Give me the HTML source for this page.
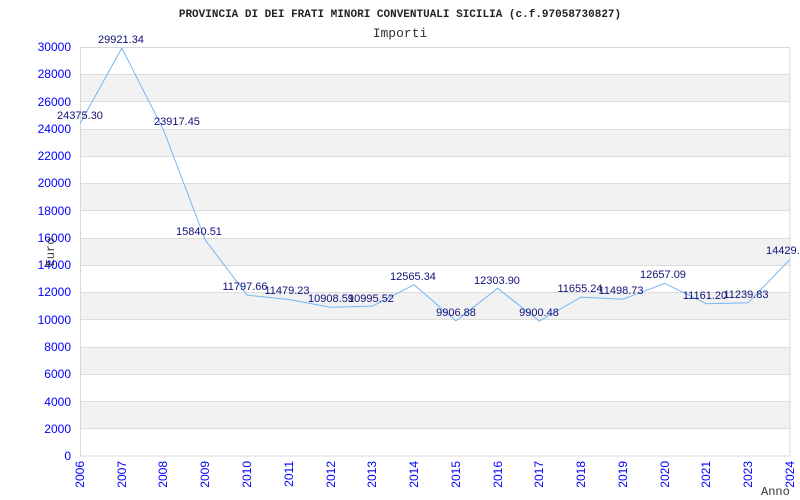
<!DOCTYPE html>
<html><head><style>
body{margin:0;background:#fff}
svg{display:block}
.t{font-family:"Liberation Sans",sans-serif;font-size:11px;fill:#10107a;text-anchor:middle}
.ax{font-family:"Liberation Sans",sans-serif;font-size:12px;fill:#0000ff}
</style></head><body>
<svg width="800" height="500" xmlns="http://www.w3.org/2000/svg">
<rect width="800" height="500" fill="#fff"/>
<text x="400" y="17" text-anchor="middle" font-family="Liberation Mono,monospace" font-size="11" font-weight="bold" fill="#222">PROVINCIA DI DEI FRATI MINORI CONVENTUALI SICILIA (c.f.97058730827)</text>
<text x="400" y="37" text-anchor="middle" font-family="Liberation Mono,monospace" font-size="13" fill="#333">Importi</text>
<g fill="#f2f2f2">
<rect x="80" y="401.5" width="710" height="27.3"/>
<rect x="80" y="347" width="710" height="27.3"/>
<rect x="80" y="292.5" width="710" height="27.3"/>
<rect x="80" y="238" width="710" height="27.3"/>
<rect x="80" y="183.5" width="710" height="27.3"/>
<rect x="80" y="129" width="710" height="27.3"/>
<rect x="80" y="74.5" width="710" height="27.3"/>
</g>
<g stroke="#ddd" stroke-width="1">
<line x1="80" x2="790" y1="428.5" y2="428.5"/><line x1="80" x2="790" y1="401.5" y2="401.5"/>
<line x1="80" x2="790" y1="374.5" y2="374.5"/><line x1="80" x2="790" y1="347.5" y2="347.5"/>
<line x1="80" x2="790" y1="319.5" y2="319.5"/><line x1="80" x2="790" y1="292.5" y2="292.5"/>
<line x1="80" x2="790" y1="265.5" y2="265.5"/><line x1="80" x2="790" y1="238.5" y2="238.5"/>
<line x1="80" x2="790" y1="210.5" y2="210.5"/><line x1="80" x2="790" y1="183.5" y2="183.5"/>
<line x1="80" x2="790" y1="156.5" y2="156.5"/><line x1="80" x2="790" y1="129.5" y2="129.5"/>
<line x1="80" x2="790" y1="101.5" y2="101.5"/><line x1="80" x2="790" y1="74.5" y2="74.5"/>
</g>
<rect x="80.5" y="47.5" width="709.5" height="408.5" fill="none" stroke="#d8d8d8"/>
<g class="ax" text-anchor="end">
<text x="71" y="460">0</text><text x="71" y="433">2000</text><text x="71" y="406">4000</text>
<text x="71" y="378">6000</text><text x="71" y="351">8000</text><text x="71" y="324">10000</text>
<text x="71" y="296">12000</text><text x="71" y="269">14000</text><text x="71" y="242">16000</text>
<text x="71" y="215">18000</text><text x="71" y="187">20000</text><text x="71" y="160">22000</text>
<text x="71" y="133">24000</text><text x="71" y="106">26000</text><text x="71" y="78">28000</text>
<text x="71" y="51">30000</text>
</g>
<text transform="translate(54,252) rotate(-90)" text-anchor="middle" font-family="Liberation Mono,monospace" font-size="12" fill="#333">Euro</text>
<g class="ax" text-anchor="end">
<text transform="translate(84,461) rotate(-90)">2006</text>
<text transform="translate(126,461) rotate(-90)">2007</text>
<text transform="translate(167,461) rotate(-90)">2008</text>
<text transform="translate(209,461) rotate(-90)">2009</text>
<text transform="translate(251,461) rotate(-90)">2010</text>
<text transform="translate(293,461) rotate(-90)">2011</text>
<text transform="translate(335,461) rotate(-90)">2012</text>
<text transform="translate(376,461) rotate(-90)">2013</text>
<text transform="translate(418,461) rotate(-90)">2014</text>
<text transform="translate(460,461) rotate(-90)">2015</text>
<text transform="translate(502,461) rotate(-90)">2016</text>
<text transform="translate(543,461) rotate(-90)">2017</text>
<text transform="translate(585,461) rotate(-90)">2018</text>
<text transform="translate(627,461) rotate(-90)">2019</text>
<text transform="translate(669,461) rotate(-90)">2020</text>
<text transform="translate(710,461) rotate(-90)">2021</text>
<text transform="translate(752,461) rotate(-90)">2023</text>
<text transform="translate(794,461) rotate(-90)">2024</text>
</g>
<text x="761" y="495" font-family="Liberation Mono,monospace" font-size="12" fill="#333">Anno</text>
<polyline fill="none" stroke="#77b5f5" stroke-width="1" points="80,123.7 121.8,48.1 163.5,129.9 205.3,240 247.1,295.2 288.8,299.5 330.6,307.3 372.4,306.1 414.1,284.7 455.9,320.9 497.6,288.3 539.4,321 581.2,297.1 622.9,299.2 664.7,283.4 706.5,303.8 748.2,302.8 790,259.3"/>
<g class="t">
<text x="80" y="119">24375.30</text>
<text x="121" y="43">29921.34</text>
<text x="177" y="125">23917.45</text>
<text x="199" y="235">15840.51</text>
<text x="245" y="290">11797.66</text>
<text x="287" y="294">11479.23</text>
<text x="331" y="302">10908.59</text>
<text x="371" y="302">10995.52</text>
<text x="413" y="280">12565.34</text>
<text x="456" y="316">9906.88</text>
<text x="497" y="284">12303.90</text>
<text x="539" y="316">9900.48</text>
<text x="580" y="292">11655.24</text>
<text x="621" y="294">11498.73</text>
<text x="663" y="278">12657.09</text>
<text x="705" y="299">11161.20</text>
<text x="746" y="298">11239.83</text>
<text x="766" y="254" text-anchor="start">14429.00</text>
</g>
</svg>
</body></html>
